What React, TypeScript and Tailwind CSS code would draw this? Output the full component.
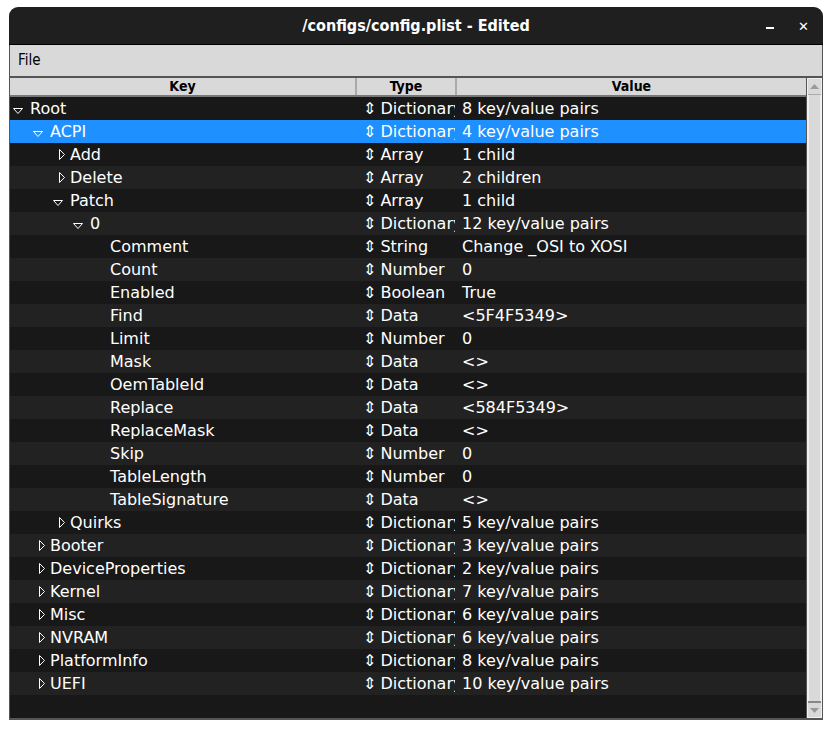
type Row = { key: string; depth: number; arrow: 'down' | 'right' | null; type: string; value: string };

const rows: Row[] = [
  { key: 'Root', depth: 0, arrow: 'down', type: 'Dictionary', value: '8 key/value pairs' },
  { key: 'ACPI', depth: 1, arrow: 'down', type: 'Dictionary', value: '4 key/value pairs' },
  { key: 'Add', depth: 2, arrow: 'right', type: 'Array', value: '1 child' },
  { key: 'Delete', depth: 2, arrow: 'right', type: 'Array', value: '2 children' },
  { key: 'Patch', depth: 2, arrow: 'down', type: 'Array', value: '1 child' },
  { key: '0', depth: 3, arrow: 'down', type: 'Dictionary', value: '12 key/value pairs' },
  { key: 'Comment', depth: 4, arrow: null, type: 'String', value: 'Change _OSI to XOSI' },
  { key: 'Count', depth: 4, arrow: null, type: 'Number', value: '0' },
  { key: 'Enabled', depth: 4, arrow: null, type: 'Boolean', value: 'True' },
  { key: 'Find', depth: 4, arrow: null, type: 'Data', value: '<5F4F5349>' },
  { key: 'Limit', depth: 4, arrow: null, type: 'Number', value: '0' },
  { key: 'Mask', depth: 4, arrow: null, type: 'Data', value: '<>' },
  { key: 'OemTableId', depth: 4, arrow: null, type: 'Data', value: '<>' },
  { key: 'Replace', depth: 4, arrow: null, type: 'Data', value: '<584F5349>' },
  { key: 'ReplaceMask', depth: 4, arrow: null, type: 'Data', value: '<>' },
  { key: 'Skip', depth: 4, arrow: null, type: 'Number', value: '0' },
  { key: 'TableLength', depth: 4, arrow: null, type: 'Number', value: '0' },
  { key: 'TableSignature', depth: 4, arrow: null, type: 'Data', value: '<>' },
  { key: 'Quirks', depth: 2, arrow: 'right', type: 'Dictionary', value: '5 key/value pairs' },
  { key: 'Booter', depth: 1, arrow: 'right', type: 'Dictionary', value: '3 key/value pairs' },
  { key: 'DeviceProperties', depth: 1, arrow: 'right', type: 'Dictionary', value: '2 key/value pairs' },
  { key: 'Kernel', depth: 1, arrow: 'right', type: 'Dictionary', value: '7 key/value pairs' },
  { key: 'Misc', depth: 1, arrow: 'right', type: 'Dictionary', value: '6 key/value pairs' },
  { key: 'NVRAM', depth: 1, arrow: 'right', type: 'Dictionary', value: '6 key/value pairs' },
  { key: 'PlatformInfo', depth: 1, arrow: 'right', type: 'Dictionary', value: '8 key/value pairs' },
  { key: 'UEFI', depth: 1, arrow: 'right', type: 'Dictionary', value: '10 key/value pairs' },
];

const indents = ['pl-[3px]', 'pl-[23px]', 'pl-[43px]', 'pl-[63px]', 'pl-[83px]'];

function Arrow({ dir }: { dir: 'down' | 'right' | null }) {
  if (dir === 'down') {
    return (
      <svg width="10" height="6" viewBox="0 0 10 6" className="mr-[7px] mt-[5px] shrink-0">
        <path d="M0.5 0.5 H9.5 L5 5.5 Z" fill="none" stroke="white" strokeWidth="1" />
      </svg>
    );
  }
  if (dir === 'right') {
    return (
      <svg width="6" height="11" viewBox="0 0 6 11" className="ml-[6px] mr-[5px] shrink-0">
        <path d="M0.5 0.5 V10.5 L5.5 5.5 Z" fill="none" stroke="white" strokeWidth="1" />
      </svg>
    );
  }
  return <span className="w-[17px] shrink-0" />;
}

function TreeRow({ row, i }: { row: Row; i: number }) {
  const bg = i === 1 ? 'bg-[#1e90ff]' : i % 2 === 1 ? 'bg-[#222222]' : 'bg-[#181818]';
  return (
    <div className={`flex h-[23px] shrink-0 items-center text-[16px] text-white ${bg}`}>
      <div className={`flex w-[348px] shrink-0 items-center overflow-hidden ${indents[row.depth]}`}>
        <Arrow dir={row.arrow} />
        <span className="whitespace-nowrap">{row.key}</span>
      </div>
      <div className="flex w-[97px] shrink-0 items-center overflow-hidden pl-[5px]">
        <span className="mr-[4px] text-[16px]">⇕</span>
        <span className="whitespace-nowrap">{row.type}</span>
      </div>
      <div className="flex-1 overflow-hidden whitespace-nowrap pl-[7px]">{row.value}</div>
    </div>
  );
}

export default function App() {
  return (
    <div className="h-[729px] w-[832px] bg-white pt-[7px] pl-[9px]" style={{ fontFamily: '"DejaVu Sans", sans-serif' }}>
      <div className="relative flex w-[814px] flex-col overflow-hidden rounded-t-[9px]">
        <div className="flex h-[38px] items-center border-b border-black bg-[#1f1f1f]">
          <div className="flex-1 pt-[1px] text-center text-[16px] font-bold text-white" style={{ fontFamily: '"DejaVu Sans Condensed", "DejaVu Sans", sans-serif', fontStretch: 'condensed' }}>
            /configs/config.plist - Edited
          </div>
          <div className="absolute left-[757px] top-[20px] h-[2px] w-[8px] bg-white" />
          <div className="absolute left-[789px] top-[10px] text-[13px] font-bold text-white">✕</div>
        </div>
        <div className="flex h-[31px] items-center border-x border-[#555] bg-[#d9d9d9] pl-[8px] text-[15px] text-black" style={{ fontFamily: '"DejaVu Sans Condensed", "DejaVu Sans", sans-serif', fontStretch: 'condensed' }}>
          File
        </div>
        <div className="flex border-x border-b-2 border-[#555] bg-[#555] pt-[2px]">
          <div className="flex w-[796px] flex-col">
            <div className="flex h-[19px] border-b-2 border-[#777] bg-[#d9d9d9] text-[14px] font-bold text-black" style={{ fontFamily: '"DejaVu Sans Condensed", "DejaVu Sans", sans-serif', fontStretch: 'condensed' }}>
              <div className="w-[347px] border-r-2 border-[#aaa] text-center leading-[17px]">Key</div>
              <div className="w-[100px] border-r-2 border-[#aaa] text-center leading-[17px]">Type</div>
              <div className="flex-1 text-center leading-[17px]">Value</div>
            </div>
            <div className="flex h-[621px] flex-col overflow-hidden bg-[#181818]">
              {rows.map((r, i) => (
                <TreeRow key={i} row={r} i={i} />
              ))}
            </div>
          </div>
          <div className="ml-[1px] flex w-[15px] flex-col border border-[#f0f0f0] bg-[#d9d9d9]">
            <div className="flex h-[16px] items-center justify-center border-b border-[#aaa]">
              <svg width="9" height="5" viewBox="0 0 9 5"><path d="M4.5 0 L9 5 H0 Z" fill="#999" /></svg>
            </div>
            <div className="flex-1 border-x border-[#f0f0f0]" />
            <div className="flex h-[16px] items-center justify-center border-t-2 border-[#888]">
              <svg width="9" height="5" viewBox="0 0 9 5"><path d="M0 0 H9 L4.5 5 Z" fill="#999" /></svg>
            </div>
          </div>
        </div>
      </div>
    </div>
  );
}
